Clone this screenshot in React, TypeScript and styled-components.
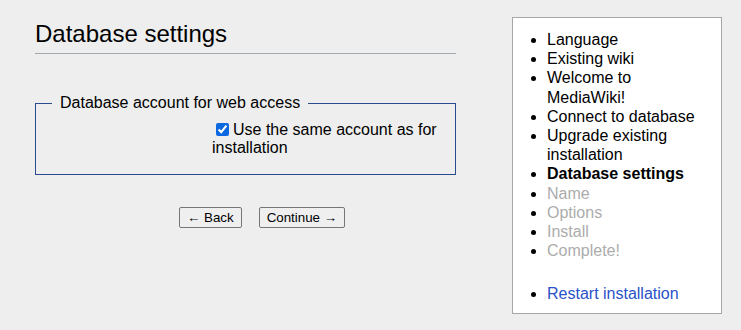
import styled, { createGlobalStyle } from 'styled-components';

const steps = [
  { label: 'Language', state: 'done' },
  { label: 'Existing wiki', state: 'done' },
  { label: 'Welcome to MediaWiki!', state: 'done' },
  { label: 'Connect to database', state: 'done' },
  { label: 'Upgrade existing installation', state: 'done' },
  { label: 'Database settings', state: 'current' },
  { label: 'Name', state: 'todo' },
  { label: 'Options', state: 'todo' },
  { label: 'Install', state: 'todo' },
  { label: 'Complete!', state: 'todo' },
] as const;

export default function App() {
  return (
    <>
      <GlobalStyle />
      <Page>
        <Main>
          <Heading>Database settings</Heading>

          <Fieldset>
            <Legend>Database account for web access</Legend>
            <CheckRow>
              <Checkbox type="checkbox" defaultChecked />
              Use the same account as for installation
            </CheckRow>
          </Fieldset>

          <Submit>
            <Button>← Back</Button>
            <Button>Continue →</Button>
          </Submit>
        </Main>

        <Sidebar>
          <StepList>
            {steps.map((s) => (
              <Step key={s.label} $state={s.state}>
                {s.label}
              </Step>
            ))}
          </StepList>
          <StepList $gap>
            <Step $state="link">
              <RestartLink href="#">Restart installation</RestartLink>
            </Step>
          </StepList>
        </Sidebar>
      </Page>
    </>
  );
}

const GlobalStyle = createGlobalStyle`
  html, body {
    margin: 0;
    padding: 0;
    background: #eeeeee;
  }
  body {
    font-family: "Liberation Sans", Arial, sans-serif;
    color: #000;
  }
`;

const Page = styled.div`
  display: flex;
  align-items: flex-start;
  min-height: 330px;
  box-sizing: border-box;
  padding: 17px 0 0 35px;
`;

const Main = styled.div`
  width: 421px;
  flex-shrink: 0;
`;

const Heading = styled.h2`
  margin: 0;
  padding: 3px 0 5px;
  font-size: 24px;
  font-weight: normal;
  line-height: 28px;
  border-bottom: 1px solid #a2a9b1;
`;

const Fieldset = styled.fieldset`
  margin: 40px 0 0;
  padding: 6px 12px 17px;
  border: 1px solid #2a4b8d;
  font-size: 16px;
`;

const Legend = styled.legend`
  margin-left: 4px;
  padding: 0 8px;
  font-size: 16px;
`;

const CheckRow = styled.label`
  display: block;
  margin-left: 164px;
  margin-top: 3px;
  line-height: 18px;
  font-size: 16px;
`;

const Checkbox = styled.input`
  width: 13px;
  height: 13px;
  margin: 0 4px 0 4px;
  vertical-align: -1px;
  accent-color: #0b68e0;
`;

const Submit = styled.div`
  display: flex;
  gap: 17px;
  margin: 32px 0 0 144px;
`;

const Button = styled.button`
  font-family: "Liberation Sans", Arial, sans-serif;
  font-size: 13.33px;
  height: 21px;
  padding: 1px 7px;
  border: 1px solid #767676;
  border-radius: 2px;
  background: #efefef;
  color: #000;
`;

const Sidebar = styled.div`
  width: 210px;
  box-sizing: border-box;
  margin-left: 56px;
  padding: 12px 0 10px;
  background: #fff;
  border: 1px solid #a7a7a7;
`;

const StepList = styled.ul<{ $gap?: boolean }>`
  margin: ${(p) => (p.$gap ? '23.5px' : '0')} 0 0;
  padding: 0 26px 0 34px;
  list-style: disc;
  font-size: 16px;
  line-height: 19.2px;
`;

const Step = styled.li<{ $state: 'done' | 'current' | 'todo' | 'link' }>`
  color: ${(p) => (p.$state === 'todo' ? '#acacac' : '#000')};
  font-weight: ${(p) => (p.$state === 'current' ? 'bold' : 'normal')};

  &::marker {
    color: #000;
  }
`;

const RestartLink = styled.a`
  color: #2a52c9;
  text-decoration: none;
`;
